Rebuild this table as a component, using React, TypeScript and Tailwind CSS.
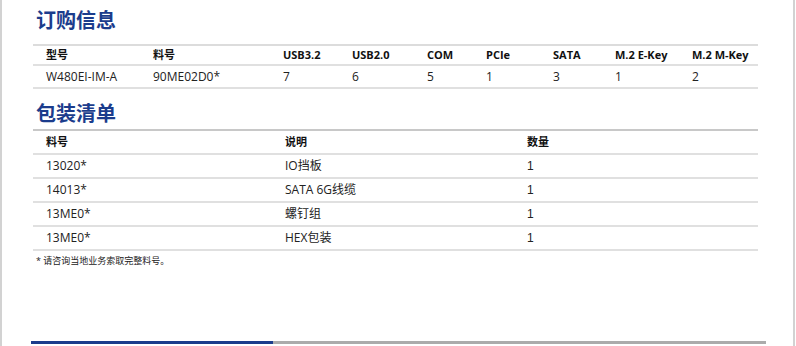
import React from "react";

const font = { fontFamily: '"Open Sans", "Noto Sans CJK SC", sans-serif' };
const arial = { fontFamily: '"Liberation Sans", "Noto Sans CJK SC", sans-serif' };

const t1Cols = "grid grid-cols-[107px_130px_69px_75px_59px_67px_62px_77px_79px]";
const t2Cols = "grid grid-cols-[239px_242px_244px]";

const t1Head = ["型号", "料号", "USB3.2", "USB2.0", "COM", "PCIe", "SATA", "M.2 E-Key", "M.2 M-Key"];
const t1Row = ["W480EI-IM-A", "90ME02D0*", "7", "6", "5", "1", "3", "1", "2"];

const t2Rows = [
  ["13020*", "IO挡板", "1"],
  ["14013*", "SATA 6G线缆", "1"],
  ["13ME0*", "螺钉组", "1"],
  ["13ME0*", "HEX包装", "1"],
];

export default function App() {
  return (
    <div className="w-[796px] h-[346px] bg-white overflow-hidden" style={font}>
      <div className="w-[795px] h-[346px] border-l-2 border-r-2 border-[#d2d2d2] flex flex-col">
        <div className="pl-[34px] pt-[7px] h-[44px] text-[20px] leading-[28px] font-bold text-[#1b3c8c]">订购信息</div>
        <div className="ml-[31px] w-[725px] border-t-2 border-[#dcdcdc]">
          <div className={`${t1Cols} h-[18px] items-center text-[11px] font-bold text-[#111]`}>
            {t1Head.map((h) => (
              <div key={h} className="pl-[13px] leading-[14px]">{h}</div>
            ))}
          </div>
          <div className={`${t1Cols} h-[25px] items-center border-t-2 border-b-2 border-[#e0e0e0] text-[12px] text-[#222]`}>
            {t1Row.map((c, i) => (
              <div key={i} className="pl-[13px] leading-[16px]">{c}</div>
            ))}
          </div>
        </div>
        <div className="pl-[34px] pt-[11px] h-[40px] text-[20px] leading-[28px] font-bold text-[#1b3c8c]">包装清单</div>
        <div className="ml-[31px] w-[725px] border-t-2 border-[#c8c8c8]">
          <div className={`${t2Cols} h-[22px] items-center text-[11px] font-bold text-[#111]`}>
            {["料号", "说明", "数量"].map((h) => (
              <div key={h} className="pl-[13px] leading-[14px]">{h}</div>
            ))}
          </div>
          {t2Rows.map((r, i) => (
            <div key={i} className={`${t2Cols} h-[24px] items-center border-t-2 border-[#e0e0e0] text-[12px] text-[#222]`}>
              {r.map((c, j) => (
                <div key={j} className="pl-[13px] leading-[16px]" style={j === 2 ? arial : undefined}>{c}</div>
              ))}
            </div>
          ))}
          <div className="border-t-2 border-[#e0e0e0]" />
        </div>
        <div className="pl-[34px] pt-[4px] text-[9px] leading-[12px] text-[#222]">* 请咨询当地业务索取完整料号。</div>
        <div className="flex-1" />
        <div className="ml-[29px] mb-[2px] flex h-[3px] w-[735px]">
          <div className="w-[242px] bg-[#1b3c8c]" />
          <div className="flex-1 bg-[#ababab]" />
        </div>
      </div>
    </div>
  );
}
